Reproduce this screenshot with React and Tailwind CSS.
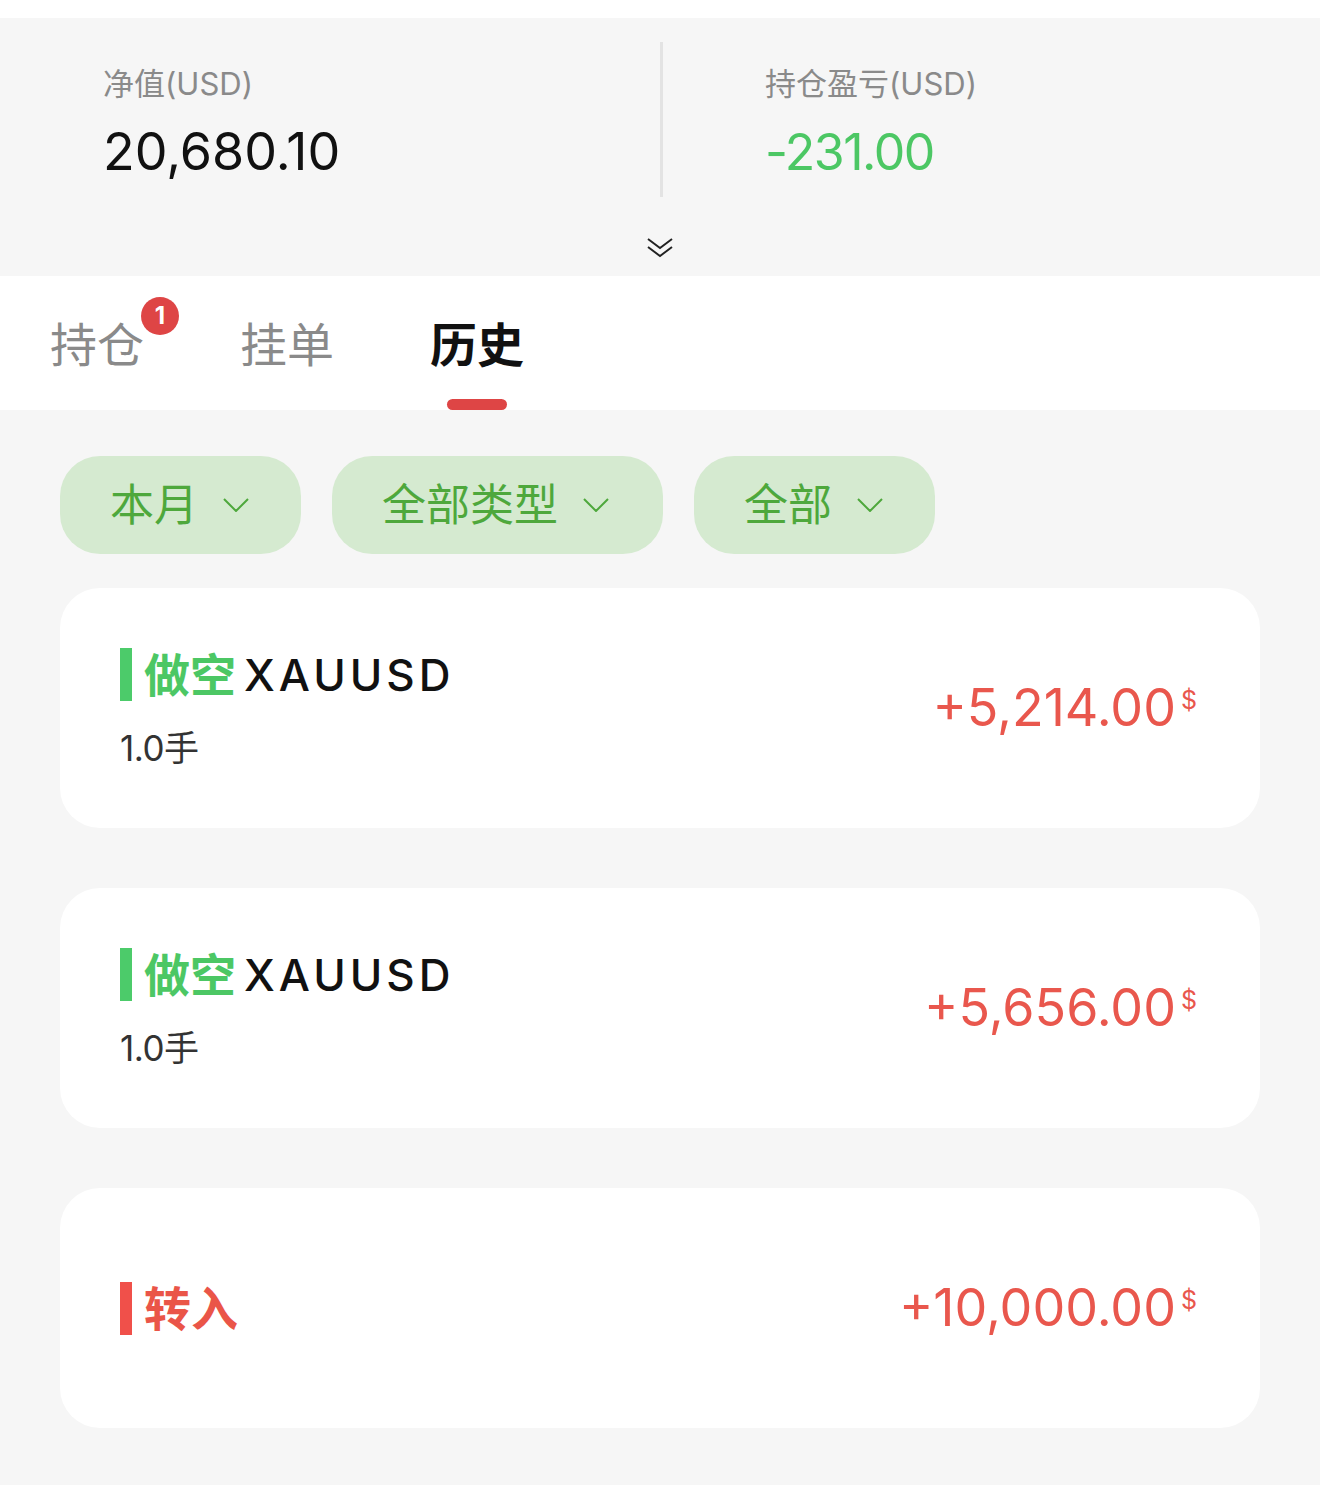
const FONT = "font-['Inter','Noto_Sans_CJK_SC',sans-serif]";

const filters = [
  { label: "本月", width: "w-[241px]" },
  { label: "全部类型", width: "w-[331px]" },
  { label: "全部", width: "w-[241px]" }
];

const records = [
  { side: "做空", symbol: "XAUUSD", lots: "1.0手", amount: "+5,214.00", tone: "green" },
  { side: "做空", symbol: "XAUUSD", lots: "1.0手", amount: "+5,656.00", tone: "green" },
  { side: "转入", amount: "+10,000.00", tone: "red" }
];

const ChevronDown = ({ className }) => (
  <svg viewBox="0 0 26 14" className={className} fill="none" stroke="currentColor" strokeWidth="2">
    <path d="M1 1l12 12L25 1" />
  </svg>
);

const RecordCard = ({ record }) => {
  const isTransfer = record.tone === "red";

  return (
    <div className="flex h-[240px] items-center justify-between rounded-[40px] bg-white pl-[60px] pr-[63px]">
      {isTransfer ? (
        <div className="flex items-center gap-[12px]">
          <span className="h-[53px] w-[12px] bg-[#f0504a]" />
          <span className="text-[47px] font-bold leading-none text-[#ea5548]">{record.side}</span>
        </div>
      ) : (
        <div className="flex flex-col gap-[30px] pb-[2px]">
          <div className="flex items-center gap-[12px]">
            <span className="h-[53px] w-[12px] bg-[#4ccb6a]" />
            <span className="flex items-center gap-[8px] leading-none">
              <span className="text-[46px] font-bold text-[#4cc764]">{record.side}</span>
              <span className="text-[44px] font-medium tracking-[4px] text-[#111]">{record.symbol}</span>
            </span>
          </div>
          <span className="text-[35px] leading-none tracking-[-0.5px] text-[#333]">{record.lots}</span>
        </div>
      )}
      <div className="flex items-start text-[#e9574d]">
        <span className="text-[52px] leading-none">{record.amount}</span>
        <span className="ml-[5px] mt-[6px] text-[25px] leading-none">$</span>
      </div>
    </div>
  );
};

const App = () => {
  return (
    <div className={`min-h-screen bg-[#f6f6f6] ${FONT}`}>
      <div className="h-[18px] bg-white" />

      <section className="h-[258px] bg-[#f6f6f6] pt-[24px]">
        <div className="flex h-[155px]">
          <div className="flex w-1/2 flex-col pl-[103px] pt-[22px]">
            <p className="text-[31px] leading-[40px] text-[#8a8a8a]">净值(USD)</p>
            <p className="mt-[18px] text-[52px] leading-[60px] text-[#111]">20,680.10</p>
          </div>
          <div className="w-[3px] bg-[#e3e3e3]" />
          <div className="flex flex-1 flex-col pl-[102px] pt-[22px]">
            <p className="text-[31px] leading-[40px] text-[#8a8a8a]">持仓盈亏(USD)</p>
            <p className="mt-[18px] text-[50px] leading-[60px] tracking-[-1.5px] text-[#4cc764]">-231.00</p>
          </div>
        </div>
        <div className="flex justify-center pt-[40px]">
          <svg viewBox="0 0 28 22" className="h-[22px] w-[28px] text-[#222]" fill="none" stroke="currentColor" strokeWidth="2">
            <path d="M2 2l12 9 12-9" />
            <path d="M2 10l12 9 12-9" />
          </svg>
        </div>
      </section>

      <nav className="flex h-[134px] items-end gap-[96px] bg-white pl-[50px]">
        <div className="relative flex h-full flex-col items-center justify-center pt-[2px]">
          <span className="text-[47px] leading-none text-[#8a8a8a]">持仓</span>
          <span className="absolute left-[91px] top-[21px] flex h-[38px] w-[38px] items-center justify-center rounded-full bg-[#de4545] text-[24px] font-bold leading-none text-white">
            1
          </span>
        </div>
        <div className="flex h-full flex-col items-center justify-center pt-[2px]">
          <span className="text-[47px] leading-none text-[#8a8a8a]">挂单</span>
        </div>
        <div className="relative flex h-full flex-col items-center justify-center pt-[2px]">
          <span className="text-[47px] font-bold leading-none text-[#111]">历史</span>
          <span className="absolute bottom-0 h-[11px] w-[60px] rounded-full bg-[#de4545]" />
        </div>
      </nav>

      <div className="flex gap-[31px] px-[60px] pt-[46px]">
        {filters.map((filter) => (
          <button
            key={filter.label}
            type="button"
            className={`flex h-[98px] ${filter.width} items-center gap-[25px] rounded-[40px] bg-[#d5ead0] pl-[50px] text-[#4ea83c]`}
          >
            <span className="text-[44px] leading-none">{filter.label}</span>
            <ChevronDown className="h-[14px] w-[26px]" />
          </button>
        ))}
      </div>

      <main className="flex flex-col gap-[60px] px-[60px] pb-[57px] pt-[34px]">
        {records.map((record, index) => (
          <RecordCard key={index} record={record} />
        ))}
      </main>
    </div>
  );
};

export default App;
